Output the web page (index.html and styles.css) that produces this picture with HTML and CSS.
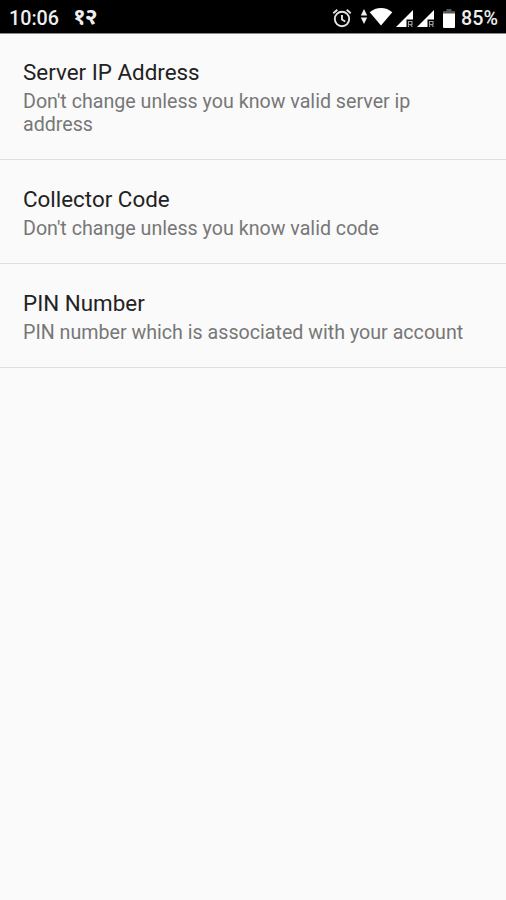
FILE: index.html
```
<!DOCTYPE html>
<html lang="en">
<head>
    <meta charset="UTF-8">
    <meta name="viewport" content="width=device-width, initial-scale=1.0">
    <title>Settings</title>
    <link rel="stylesheet" href="styles.css">
</head>
<body>
    <header class="status-bar">
        <span class="clock">10:06</span>
        <span class="date">१२</span>
        <div class="status-icons">
            <svg class="alarm" width="20" height="20" viewBox="0 0 20 20" fill="none" stroke="#e4e4e4" stroke-width="1.9">
                <circle cx="10" cy="11" r="7.2"/>
                <path d="M1.3 5.2 5.3 1.8M18.7 5.2 14.7 1.8M10 7v4.5l3.2 2"/>
            </svg>
            <svg class="data" width="8" height="15" viewBox="0 0 8 15" fill="#eee">
                <path d="M4 0 7.2 6.5H.8zM4 15 .8 8.5h6.4z"/>
            </svg>
            <svg class="wifi" width="24" height="18" viewBox="0 0 24 18" fill="#fff">
                <path d="M12 17.5.7 4.2C4 1.6 7.8 0 12 0s8 1.6 11.3 4.2z"/>
            </svg>
            <svg class="signal" width="17" height="17" viewBox="0 0 17 17">
                <path fill="#fff" d="M17 0v9.5h-6.5V17H0z"/>
                <path fill="none" stroke="#999" stroke-width="1.2" d="M12.5 17v-5.5H16v3h-3.5M14.5 14.5l2 2.5"/>
            </svg>
            <svg class="signal" width="17" height="17" viewBox="0 0 17 17">
                <path fill="#fff" d="M17 0v9.5h-6.5V17H0z"/>
                <path fill="none" stroke="#999" stroke-width="1.2" d="M12.5 17v-5.5H16v3h-3.5M14.5 14.5l2 2.5"/>
            </svg>
            <svg class="battery" width="12" height="19" viewBox="0 0 12 19">
                <path fill="#555" d="M3.5 0h5v2H12v3H0V2h3.5z"/>
                <path fill="#fff" d="M0 4.5h12V18a1 1 0 0 1-1 1H1a1 1 0 0 1-1-1z"/>
            </svg>
            <span class="percent">85%</span>
        </div>
    </header>
    <main class="settings">
        <section class="item">
            <h2>Server IP Address</h2>
            <p>Don't change unless you know valid server ip address</p>
        </section>
        <section class="item">
            <h2>Collector Code</h2>
            <p>Don't change unless you know valid code</p>
        </section>
        <section class="item">
            <h2>PIN Number</h2>
            <p>PIN number which is associated with your account</p>
        </section>
    </main>
</body>
</html>
```
FILE: styles.css
```
body {
    font-family: Roboto, "Noto Sans", sans-serif;
    background: #fafafa;
    margin: 0;
    min-height: 100vh;
}
.status-bar {
    background: #000;
    color: #eee;
    height: 34px;
    box-sizing: border-box;
    border-bottom: 1px solid #8c8888;
    padding: 3px 8px 0 9px;
    display: flex;
    align-items: center;
    font-size: 19.7px;
    font-weight: 500;
}
.date {
    margin: 0 0 3px 14px;
    font-size: 23px;
    font-weight: 700;
    line-height: 20px;
    letter-spacing: -1px;
}
.status-icons {
    margin-left: auto;
    display: flex;
    align-items: center;
}
.data {
    margin: 0 0 4px 8px;
}
.wifi {
    margin: 0 0 2px 1px;
}
.signal {
    margin-left: 3px;
}
.signal + .signal {
    margin-left: 4px;
}
.battery {
    margin: 0 6px 0 9px;
}
.settings {
    margin-top: -1px;
}
.item {
    padding: 26px 23px 23px;
    border-bottom: 1px solid #dedede;
}
.item h2 {
    margin: 0 0 4px;
    color: #222;
    font-size: 22.4px;
    font-weight: 400;
    line-height: 27px;
}
.item p {
    margin: 0;
    color: #777;
    font-size: 19.65px;
    line-height: 23px;
}
```
